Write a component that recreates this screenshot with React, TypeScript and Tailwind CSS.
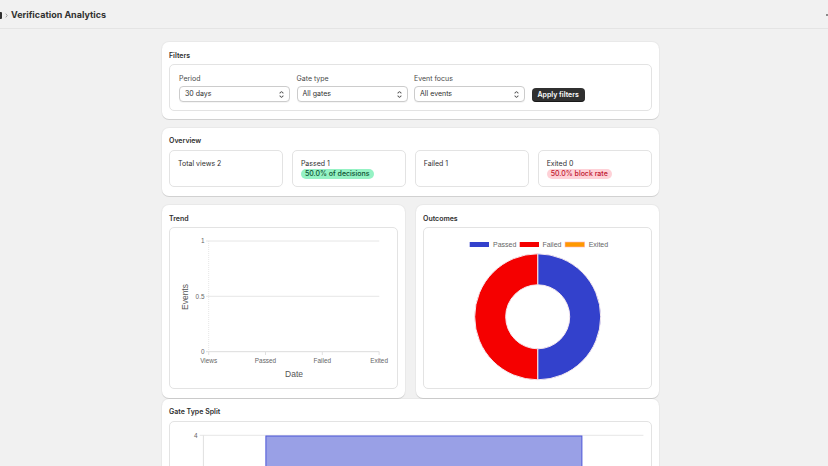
import React from "react";

const SelectIcon = () => (
  <svg viewBox="0 0 20 20" className="w-[11px] h-[11px]" fill="#4a4a4a">
    <path d="M10.884 4.323a1.25 1.25 0 0 0-1.768 0l-2.646 2.647a.75.75 0 0 0 1.06 1.06l2.47-2.47 2.47 2.47a.75.75 0 1 0 1.06-1.06l-2.646-2.647Z" />
    <path d="m13.53 13.03-2.646 2.647a1.25 1.25 0 0 1-1.768 0l-2.646-2.647a.75.75 0 0 1 1.06-1.06l2.47 2.47 2.47-2.47a.75.75 0 0 1 1.06 1.06Z" />
  </svg>
);

const Select = ({ label, value }: { label: string; value: string }) => (
  <div className="flex flex-col gap-[2px] w-[111px]">
    <span className="text-[7px] leading-[10px] text-[#4a4a4a]">{label}</span>
    <div className="h-[16px] rounded-[4px] border border-[#cccccc] bg-white flex items-center justify-between pl-[5px] pr-[2px] shadow-[0_1px_0_rgba(0,0,0,0.04)]">
      <span className="text-[7px] leading-[10px] text-[#303030]">{value}</span>
      <SelectIcon />
    </div>
  </div>
);

const Card = ({ title, children, className = "" }: { title: string; children: React.ReactNode; className?: string }) => (
  <section className={`bg-white rounded-[7px] px-[7px] pt-[8.5px] shadow-[0_1px_0_rgba(0,0,0,0.1),0_0_0_1px_rgba(0,0,0,0.03)] ${className}`}>
    <h2 className="text-[7px] leading-[10px] font-semibold text-[#303030] mb-[3.5px]">{title}</h2>
    {children}
  </section>
);

const Stat = ({ text, badge, tone }: { text: string; badge?: string; tone?: "ok" | "bad" }) => (
  <div className="flex-1 h-[37.5px] rounded-[5px] border border-[#e3e3e3] pl-[8px] pt-[8.5px] flex flex-col items-start">
    <div className="text-[7px] leading-[10px] text-[#303030]">{text}</div>
    {badge && (
      <span
        className={`block rounded-[5px] px-[4px] text-[7px] leading-[10px] font-medium ${
          tone === "ok" ? "bg-[#95f2c4] text-[#0c5132]" : "bg-[#fed1d7] text-[#c0152e]"
        }`}
      >
        {badge}
      </span>
    )}
  </div>
);

const chartFont = "'Liberation Sans', Arial, sans-serif";

const TrendChart = () => {
  const xs = [38.7, 95.5, 152.3, 209.1];
  const labels = ["Views", "Passed", "Failed", "Exited"];
  return (
    <svg width="227" height="162" className="block" style={{ fontFamily: chartFont }}>
      {[13, 68.3].map((y) => (
        <line key={y} x1={36} x2={209.3} y1={y} y2={y} stroke="#e6e6e6" strokeWidth={1} />
      ))}
      <line x1={36} x2={209.3} y1={123.7} y2={123.7} stroke="#dcdcdc" strokeWidth={1} />
      <line x1={38.7} x2={38.7} y1={13} y2={123.7} stroke="#e6e6e6" strokeWidth={1} strokeDasharray="1 1" />
      {xs.map((x) => (
        <line key={x} x1={x} x2={x} y1={123.7} y2={127} stroke="#e0e0e0" strokeWidth={1} />
      ))}
      {[
        ["1", 13],
        ["0.5", 68.3],
        ["0", 123.7],
      ].map(([t, y]) => (
        <text key={t as string} x={34.5} y={(y as number) + 2.2} textAnchor="end" fontSize={6.4} fill="#666">
          {t}
        </text>
      ))}
      {labels.map((l, i) => (
        <text key={l} x={xs[i]} y={135} textAnchor="middle" fontSize={6.4} fill="#666">
          {l}
        </text>
      ))}
      <text x={124} y={148.5} textAnchor="middle" fontSize={8.5} fill="#555">
        Date
      </text>
      <text x={0} y={0} transform="translate(18.2 69) rotate(-90)" textAnchor="middle" fontSize={8.5} fill="#555">
        Events
      </text>
    </svg>
  );
};

const Donut = () => {
  const cx = 113.7;
  const cy = 88.8;
  const ro = 63;
  const ri = 32;
  const right = `M ${cx} ${cy - ro} A ${ro} ${ro} 0 0 1 ${cx} ${cy + ro} L ${cx} ${cy + ri} A ${ri} ${ri} 0 0 0 ${cx} ${cy - ri} Z`;
  const left = `M ${cx} ${cy + ro} A ${ro} ${ro} 0 0 1 ${cx} ${cy - ro} L ${cx} ${cy - ri} A ${ri} ${ri} 0 0 0 ${cx} ${cy + ri} Z`;
  return (
    <svg width="227" height="162" className="block" style={{ fontFamily: chartFont }}>
      <rect x={45.7} y={14} width={19.3} height={5} fill="#3341cc" />
      <text x={69} y={18.5} fontSize={7} fill="#666">Passed</text>
      <rect x={95.7} y={14} width={19.3} height={5} fill="#f50000" />
      <text x={118.4} y={18.5} fontSize={7} fill="#666">Failed</text>
      <rect x={141} y={14} width={19.7} height={5} fill="#ff9800" stroke="#ffb6c1" strokeWidth={0.6} />
      <text x={164.7} y={18.5} fontSize={7} fill="#666">Exited</text>
      <path d={right} fill="#3341cc" stroke="#f4e8ee" strokeWidth={1} />
      <path d={left} fill="#f50000" stroke="#f4e8ee" strokeWidth={1} />
    </svg>
  );
};

const GateChart = () => (
  <svg width="482" height="170" className="block" style={{ fontFamily: chartFont }}>
    <line x1={29.7} x2={473.4} y1={13.3} y2={13.3} stroke="#e6e6e6" strokeWidth={1} />
    <line x1={33.4} x2={33.4} y1={13.3} y2={170} stroke="#e0e0e0" strokeWidth={1} />
    <text x={27.5} y={15.6} textAnchor="end" fontSize={6.4} fill="#666">4</text>
    <rect x={95.9} y={14} width={316} height={160} fill="#99a0e6" stroke="#4c56d8" strokeWidth={1} />
  </svg>
);

export default function App() {
  return (
    <div className="min-h-screen bg-[#f1f1f1] text-[#303030]" style={{ fontFamily: "Inter, 'Noto Sans', sans-serif" }}>
      <header className="h-[29px] pt-[2px] border-b border-[#e4e4e4] flex items-center">
        <div className="w-[2px] h-[7px] bg-[#303030] rounded-r-[1px]" />
        <svg viewBox="0 0 4 6" className="w-[3px] h-[5px] ml-[3px]" fill="none" stroke="#8a8a8a" strokeWidth={1}>
          <path d="M1 0.5 L3 3 L1 5.5" />
        </svg>
        <h1 className="ml-[3px] text-[9px] leading-[12px] font-bold text-[#303030]">Verification Analytics</h1>
        <div className="ml-auto w-[2px] h-[2px] bg-[#8a8a8a] mr-0" />
      </header>

      <main className="ml-[162px] w-[497px] pt-[13px] flex flex-col">
        <Card title="Filters" className="pb-[8px]">
          <div className="rounded-[5px] border border-[#e3e3e3] px-[9px] pt-[9px] pb-[8px] flex items-end gap-[6.5px]">
            <Select label="Period" value="30 days" />
            <Select label="Gate type" value="All gates" />
            <Select label="Event focus" value="All events" />
            <button className="h-[14.5px] px-[6px] rounded-[4px] bg-[#303030] text-white text-[7px] leading-[10px] font-semibold shadow-[inset_0_-1px_0_rgba(0,0,0,0.5)]">
              Apply filters
            </button>
          </div>
        </Card>

        <Card title="Overview" className="mt-[8.5px] pb-[9px]">
          <div className="flex gap-[8.5px]">
            <Stat text="Total views 2" />
            <Stat text="Passed 1" badge="50.0% of decisions" tone="ok" />
            <Stat text="Failed 1" />
            <Stat text="Exited 0" badge="50.0% block rate" tone="bad" />
          </div>
        </Card>

        <div className="mt-[9px] flex gap-[11px]">
          <Card title="Trend" className="w-[243px] pb-[9px]">
            <div className="rounded-[5px] border border-[#e3e3e3] h-[162px] overflow-hidden">
              <TrendChart />
            </div>
          </Card>
          <Card title="Outcomes" className="w-[243px] pb-[9px]">
            <div className="rounded-[5px] border border-[#e3e3e3] h-[162px] overflow-hidden">
              <Donut />
            </div>
          </Card>
        </div>

        <Card title="Gate Type Split" className="mt-[0.5px] pb-[9px]">
          <div className="rounded-[5px] border border-[#e3e3e3] h-[170px] overflow-hidden">
            <GateChart />
          </div>
        </Card>
      </main>
    </div>
  );
}
